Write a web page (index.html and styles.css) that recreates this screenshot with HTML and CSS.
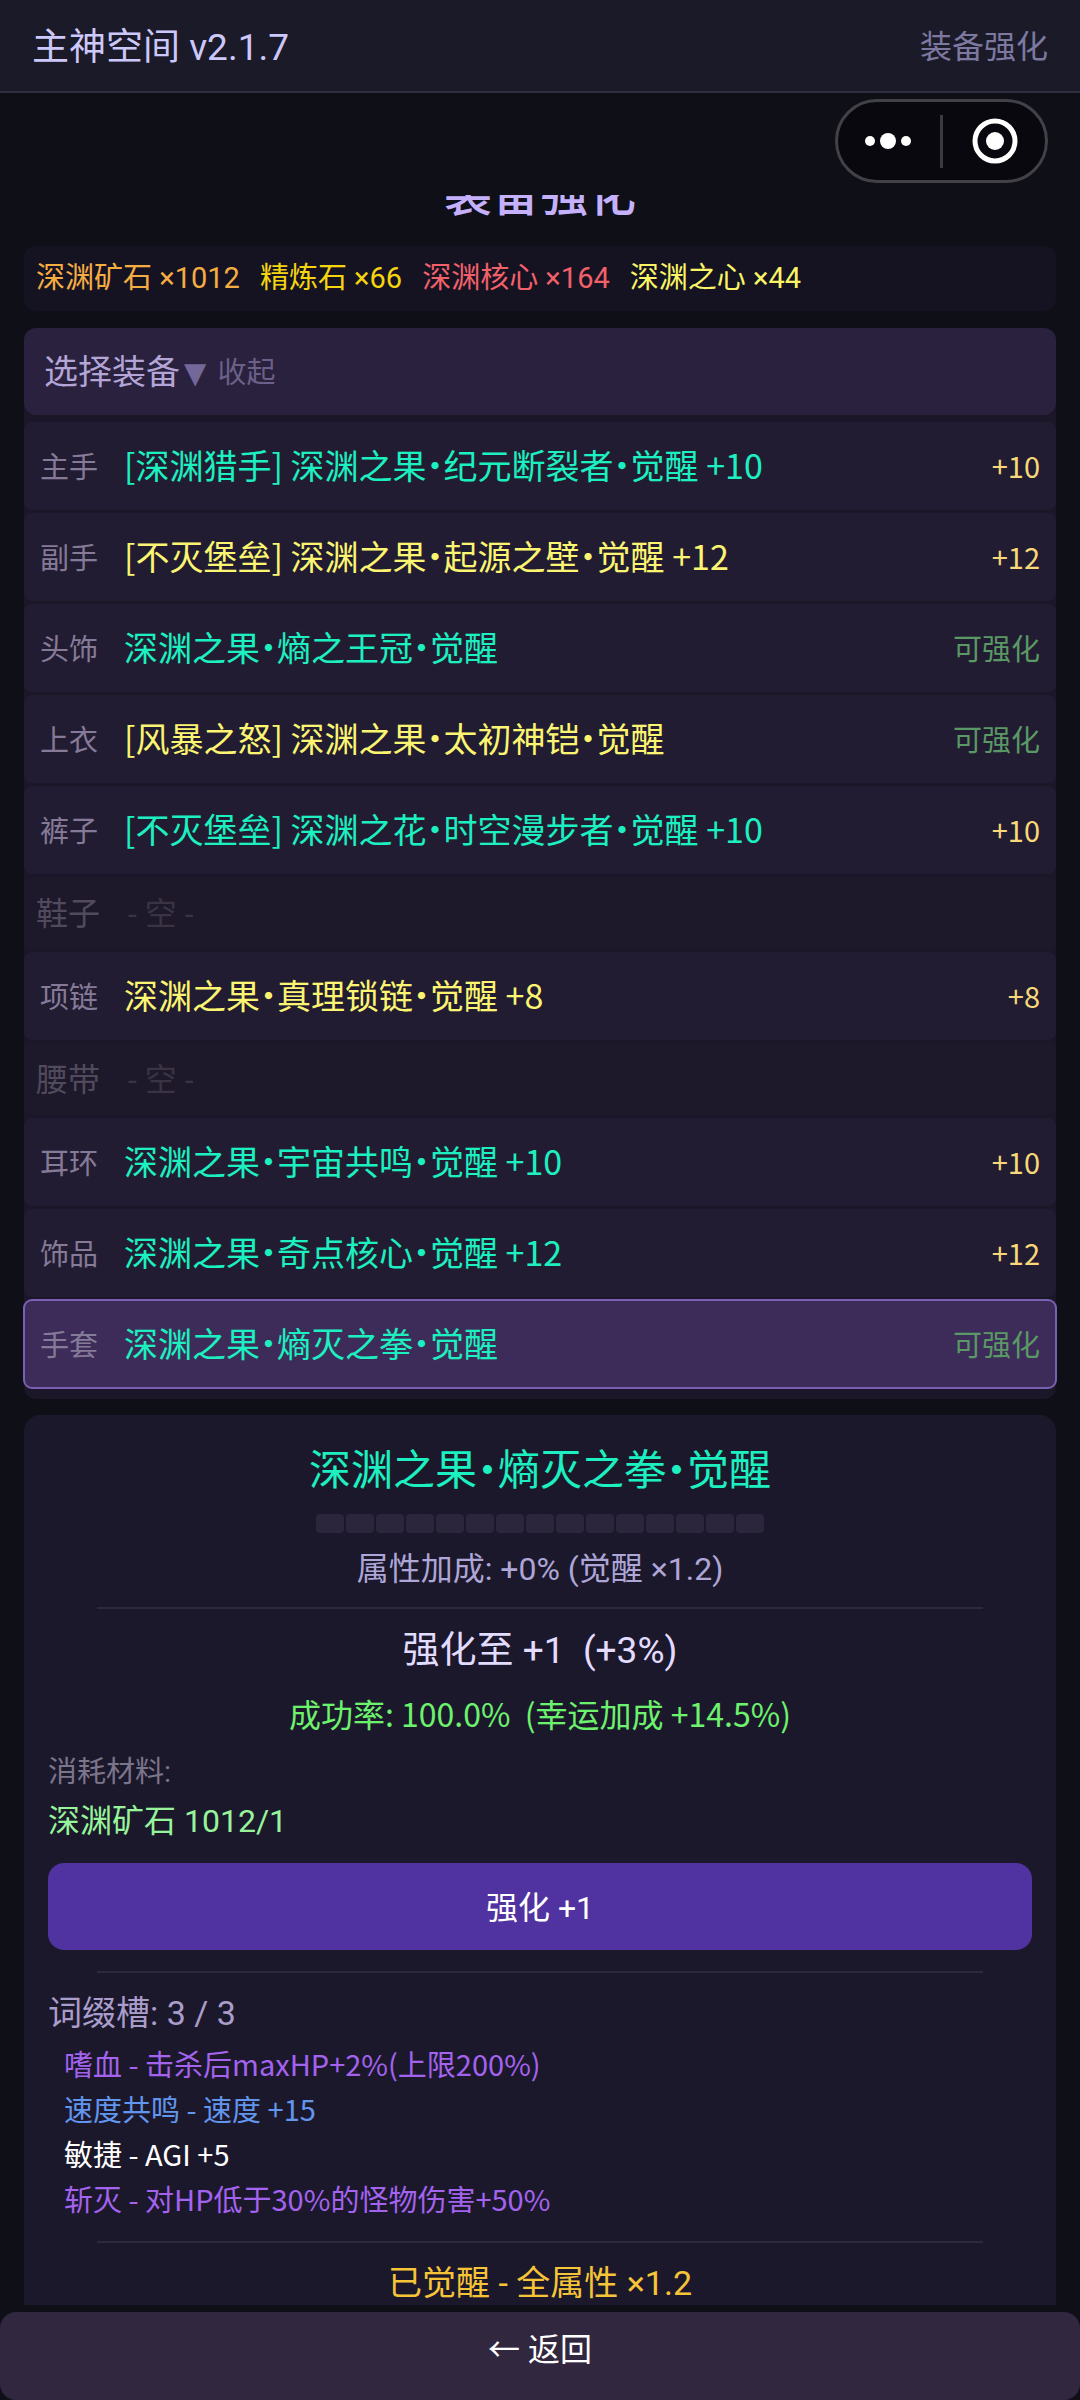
FILE: index.html
```
<!DOCTYPE html>
<html lang="zh-CN">
<head>
  <meta charset="UTF-8">
  <meta name="viewport" content="width=device-width, initial-scale=1.0">
  <title>主神空间</title>
  <link rel="stylesheet" href="styles.css">
</head>
<body>
  <div class="app">
    <header class="topbar">
      <span class="topbar-title">主神空间 v2.1.7</span>
      <span class="topbar-page">装备强化</span>
    </header>

    <div class="capsule">
      <button class="capsule-btn" aria-label="更多">
        <svg width="48" height="48" viewBox="0 0 48 48" fill="#fff">
          <circle cx="5" cy="24" r="5"/>
          <circle cx="23" cy="24" r="8"/>
          <circle cx="41" cy="24" r="5"/>
        </svg>
      </button>
      <span class="capsule-line"></span>
      <button class="capsule-btn" aria-label="关闭">
        <svg width="48" height="48" viewBox="0 0 48 48">
          <circle cx="25" cy="24" r="20" fill="none" stroke="#fff" stroke-width="5"/>
          <circle cx="25" cy="24" r="9" fill="#fff"/>
        </svg>
      </button>
    </div>

    <main class="content">
      <h1>装备强化</h1>

      <div class="resources">
        <span class="ore">深渊矿石 ×1012</span>
        <span class="refined">精炼石 ×66</span>
        <span class="core">深渊核心 ×164</span>
        <span class="heart">深渊之心 ×44</span>
      </div>

      <section class="equip">
        <button class="equip-head">
          <span>选择装备</span><span class="equip-toggle"><span class="arrow">▼</span> 收起</span>
        </button>
        <div class="equip-list">
          <button class="slot">
            <span class="slot-label">主手</span>
            <span class="slot-name cyan">[深渊猎手] 深渊之果·纪元断裂者·觉醒 +10</span>
            <span class="slot-level">+10</span>
          </button>
          <button class="slot">
            <span class="slot-label">副手</span>
            <span class="slot-name yellow">[不灭堡垒] 深渊之果·起源之壁·觉醒 +12</span>
            <span class="slot-level">+12</span>
          </button>
          <button class="slot">
            <span class="slot-label">头饰</span>
            <span class="slot-name cyan">深渊之果·熵之王冠·觉醒</span>
            <span class="slot-ready">可强化</span>
          </button>
          <button class="slot">
            <span class="slot-label">上衣</span>
            <span class="slot-name yellow">[风暴之怒] 深渊之果·太初神铠·觉醒</span>
            <span class="slot-ready">可强化</span>
          </button>
          <button class="slot">
            <span class="slot-label">裤子</span>
            <span class="slot-name cyan">[不灭堡垒] 深渊之花·时空漫步者·觉醒 +10</span>
            <span class="slot-level">+10</span>
          </button>
          <div class="slot-empty">
            <span class="slot-label">鞋子</span>
            <span class="slot-none">- 空 -</span>
          </div>
          <button class="slot">
            <span class="slot-label">项链</span>
            <span class="slot-name yellow">深渊之果·真理锁链·觉醒 +8</span>
            <span class="slot-level">+8</span>
          </button>
          <div class="slot-empty">
            <span class="slot-label">腰带</span>
            <span class="slot-none">- 空 -</span>
          </div>
          <button class="slot">
            <span class="slot-label">耳环</span>
            <span class="slot-name cyan">深渊之果·宇宙共鸣·觉醒 +10</span>
            <span class="slot-level">+10</span>
          </button>
          <button class="slot">
            <span class="slot-label">饰品</span>
            <span class="slot-name cyan">深渊之果·奇点核心·觉醒 +12</span>
            <span class="slot-level">+12</span>
          </button>
          <button class="slot selected">
            <span class="slot-label">手套</span>
            <span class="slot-name cyan">深渊之果·熵灭之拳·觉醒</span>
            <span class="slot-ready">可强化</span>
          </button>
        </div>
      </section>

      <section class="detail">
        <h2 class="cyan">深渊之果·熵灭之拳·觉醒</h2>
        <div class="steps">
          <i></i><i></i><i></i><i></i><i></i><i></i><i></i><i></i><i></i><i></i><i></i><i></i><i></i><i></i><i></i>
        </div>
        <p class="bonus">属性加成: +0% (觉醒 ×1.2)</p>
        <hr>
        <p class="next">强化至 +1&nbsp; (+3%)</p>
        <p class="rate">成功率: 100.0%&nbsp; (幸运加成 +14.5%)</p>
        <p class="cost-label">消耗材料:</p>
        <p class="cost">深渊矿石 1012/1</p>
        <button class="enhance">强化 +1</button>
        <hr>
        <h3>词缀槽: 3 / 3</h3>
        <ul class="affixes">
          <li class="epic">嗜血 - 击杀后maxHP+2%(上限200%)</li>
          <li class="rare">速度共鸣 - 速度 +15</li>
          <li class="common">敏捷 - AGI +5</li>
          <li class="epic">斩灭 - 对HP低于30%的怪物伤害+50%</li>
        </ul>
        <hr>
        <p class="awakened">已觉醒 - 全属性 ×1.2</p>
      </section>
    </main>

    <button class="back">← 返回</button>
  </div>
</body>
</html>
```
FILE: styles.css
```
* {
  box-sizing: border-box;
}

body {
  margin: 0;
  background-color: #0f0f18;
  color: #fff;
  font-family: Roboto, "Noto Sans CJK SC", sans-serif;
  font-size: 32px;
}

h1, h2, h3, p, ul {
  margin: 0;
  padding: 0;
  font-weight: 400;
}

button {
  border: none;
  font-family: inherit;
  color: inherit;
  cursor: pointer;
}

.app {
  position: relative;
  display: flex;
  flex-direction: column;
  height: 100vh;
}

.topbar {
  display: flex;
  justify-content: space-between;
  align-items: center;
  height: 93px;
  padding: 0 32px 4px;
  background-color: #1b1a28;
  border-bottom: 2px solid #2f2d3e;
}

.topbar-title {
  font-size: 37px;
  color: #cdc8fa;
}

.topbar-page {
  color: #7c78a0;
}

/* floating mini program menu */
.capsule {
  position: absolute;
  top: 99px;
  right: 32px;
  display: flex;
  align-items: center;
  width: 213px;
  height: 84px;
  background-color: #08080e;
  border: 3px solid #414147;
  border-radius: 42px;
}

.capsule-btn {
  flex: 1;
  display: flex;
  justify-content: center;
  padding: 0;
  background: none;
}

.capsule-line {
  width: 3px;
  height: 53px;
  background-color: #3a3a40;
}

.content {
  flex: 1;
  min-height: 0;
  margin: 102px 0 7px;
  padding: 0 24px;
  overflow: hidden;
}

h1 {
  margin: -32px 0 19px;
  font-size: 48px;
  font-weight: 500;
  line-height: 64px;
  text-align: center;
  color: #c4b0fb;
}

.resources {
  display: flex;
  gap: 20px;
  padding: 10px 12px;
  margin-bottom: 17px;
  background-color: #151322;
  border-radius: 12px;
  font-size: 29px;
  line-height: 45px;
}

.ore { color: #f5ac42; }
.refined { color: #f5d50f; }
.core { color: #f2606a; }
.heart { color: #fbf566; }

.cyan { color: #1cf0c0; }
.yellow { color: #fbf571; }

.equip {
  margin-bottom: 16px;
  padding-bottom: 11px;
  background-color: #1b1628;
  border-radius: 12px;
}

.equip-head {
  display: flex;
  align-items: center;
  width: 100%;
  height: 87px;
  padding: 0 20px 4px;
  background-color: #29213e;
  border-radius: 12px;
  font-size: 34px;
  color: #b3a5d6;
}

.equip-toggle {
  font-size: 29px;
  color: #6b6088;
}

.arrow {
  margin: 0 4px;
  font-family: "DejaVu Sans", sans-serif;
  color: #74689a;
}

.equip-list {
  display: flex;
  flex-direction: column;
  gap: 3px;
  padding-top: 7px;
}

.slot, .slot-empty {
  display: flex;
  align-items: center;
  gap: 12px;
  border-radius: 8px;
  text-align: left;
}

.slot {
  height: 88px;
  padding: 0 16px 3px;
  background-color: #221c32;
  font-family: "Noto Sans CJK SC", sans-serif;
  font-size: 29px;
}

.slot.selected {
  background-color: #3d2c59;
  outline: 2px solid #7a60b0;
  outline-offset: -1px;
}

.slot-empty {
  height: 72px;
  padding: 0 12px 4px;
  background-color: #1d182a;
  color: #504a5c;
}

.slot-label {
  width: 72px;
}

.slot .slot-label {
  color: #857b98;
}

/* half-width middle dots between the parts of an item name */
.slot-name, h2 {
  font-family: "Noto Sans CJK SC", sans-serif;
  font-feature-settings: "halt";
}

.slot-name {
  flex: 1;
  font-size: 34px;
}

.slot-none {
  padding-left: 8px;
  color: #393344;
}

.slot-level {
  color: #f8d878;
}

.slot-ready {
  color: #5a9865;
}

.detail {
  padding: 22px 24px;
  background-color: #1c182c;
  border-radius: 16px;
}

h2 {
  font-size: 42px;
  line-height: 60px;
  text-align: center;
}

.steps {
  display: flex;
  justify-content: center;
  gap: 2px;
  margin: 17px 0 12px;
}

.steps i {
  width: 28px;
  height: 19px;
  background-color: #2b263b;
  border-radius: 4px;
}

hr {
  width: 90%;
  height: 2px;
  margin: 14px auto;
  border: none;
  background-color: #2d283c;
}

.bonus, .next, .rate, .awakened {
  text-align: center;
}

.bonus {
  line-height: 48px;
  color: #ada6d6;
}

.next {
  font-size: 37px;
  line-height: 56px;
  color: #e2dcff;
}

.rate {
  margin: 10px 0 13px;
  font-family: "Noto Sans CJK SC", sans-serif;
  line-height: 48px;
  color: #6df26d;
}

.cost-label {
  font-size: 29px;
  line-height: 44px;
  color: #7b758b;
}

.cost {
  margin: 3px 0 18px;
  line-height: 48px;
  color: #97f49a;
}

.enhance {
  width: 100%;
  height: 87px;
  margin-bottom: 7px;
  padding: 0 0 4px;
  background-color: #5032a0;
  border-radius: 16px;
  font-size: 32px;
}

h3 {
  font-size: 34px;
  line-height: 52px;
  color: #aa9dcb;
}

.affixes {
  margin: 2px 0 20px;
  padding-left: 16px;
  list-style: none;
  font-family: "Noto Sans CJK SC", sans-serif;
  font-size: 29px;
  line-height: 45px;
}

.epic { color: #a463ee; }
.rare { color: #6296ee; }
.common { color: #fff; }

.awakened {
  font-size: 34px;
  line-height: 52px;
  color: #f6c437;
}

.back {
  height: 88px;
  padding: 0 0 18px;
  background-color: #312840;
  border-radius: 16px;
  font-size: 32px;
}
```
